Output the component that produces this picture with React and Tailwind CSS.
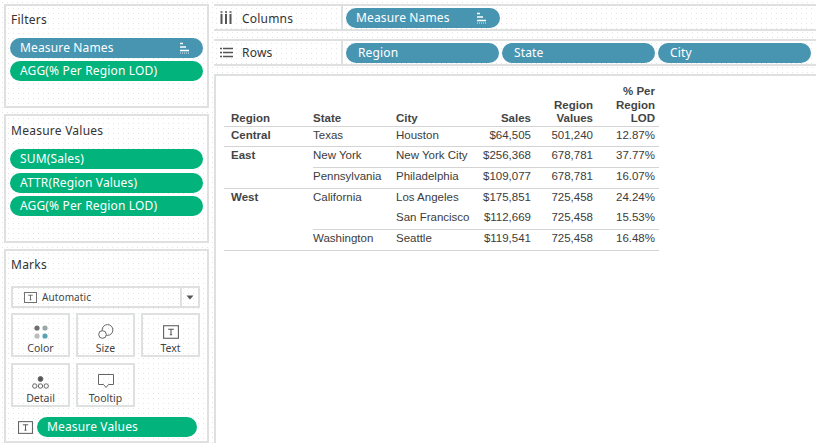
const ui = { fontFamily: '"Noto Sans", "Open Sans", sans-serif' };
const arial = { fontFamily: '"Liberation Sans", Arial, sans-serif' };
const dots = "bg-white bg-[radial-gradient(#e4e4e4_0.7px,transparent_0.8px)] bg-[size:5px_5px]";

function SortIcon() {
  return (
    <svg width="12" height="12" viewBox="0 0 12 12" className="shrink-0">
      <path d="M1 1.5h3M1 5h6M1 8.5h9" stroke="#fff" strokeWidth="1.6" />
      <path d="M1 11h10" stroke="#fff" strokeWidth="0.8" strokeDasharray="1 1" />
    </svg>
  );
}

function Pill({ children, blue, sort, className = "" }) {
  return (
    <div
      className={`flex h-5 items-center justify-between rounded-full pl-[10px] pr-3 text-[12px] tracking-[0.15px] text-white ${blue ? "bg-[#4895b2]" : "bg-[#02b37c]"} ${className}`}
    >
      <span>{children}</span>
      {sort && <SortIcon />}
    </div>
  );
}

function Card({ title, titleClass = "", className = "", children }) {
  return (
    <section className={`border-2 border-[#dfe1e0] ${dots} px-1 ${className}`}>
      <h2 className={`pl-[1px] text-[12px] leading-[20px] tracking-[0.25px] text-[#333] ${titleClass}`}>{title}</h2>
      {children}
    </section>
  );
}

function TGlyph({ size = 14 }) {
  return (
    <svg width={size} height={size - 2} viewBox="0 0 14 12" className="shrink-0">
      <rect x="0.5" y="0.5" width="13" height="11" fill="#fff" stroke="#666" />
      <path d="M4.5 3.5h5M7 3.5v5M6 8.5h2" stroke="#555" strokeWidth="0.9" fill="none" />
    </svg>
  );
}

function MarkCard({ label, children }) {
  return (
    <div className="flex h-[44px] w-[59px] flex-col items-center border-2 border-[#dfe1e0]">
      <div className="flex h-[25px] items-end justify-center">{children}</div>
      <div className="mt-[2px] text-[10.5px] leading-[14px] text-[#444]">{label}</div>
    </div>
  );
}

function Shelf({ label, icon, className = "", labelClass = "", children }) {
  return (
    <div className={`flex h-[27px] items-stretch border-y-2 border-[#dfe1e0] ${dots} ${className}`}>
      <div className="flex w-[129px] shrink-0 items-center border-r-2 border-[#dfe1e0] pl-[6px]">
        <span className="flex w-[22px] justify-start">{icon}</span>
        <span className={`text-[12px] tracking-[0.2px] text-[#333] ${labelClass}`}>{label}</span>
      </div>
      <div className="flex flex-1 items-center gap-[3px] pl-[3px]">{children}</div>
    </div>
  );
}

const rows = [
  { r: "Central", s: "Texas", c: "Houston", v: ["$64,505", "501,240", "12.87%"], rb: true, sb: true, cb: true },
  { r: "East", s: "New York", c: "New York City", v: ["$256,368", "678,781", "37.77%"], rb: false, sb: true, cb: true },
  { r: "", s: "Pennsylvania", c: "Philadelphia", v: ["$109,077", "678,781", "16.07%"], rb: true, sb: true, cb: true },
  { r: "West", s: "California", c: "Los Angeles", v: ["$175,851", "725,458", "24.24%"], rb: false, sb: false, cb: false },
  { r: "", s: "", c: "San Francisco", v: ["$112,669", "725,458", "15.53%"], rb: false, sb: true, cb: true },
  { r: "", s: "Washington", c: "Seattle", v: ["$119,541", "725,458", "16.48%"], rb: true, sb: true, cb: true },
];

const line = "border-b border-[#d4d4d4]";

function DataTable() {
  return (
    <div className="ml-[8px] mt-[8px] w-[435px] text-[11.5px] leading-[13px] text-[#3c3c3c]" style={arial}>
      <div className={`grid grid-cols-[89px_83px_85px_50px_62px_66px] items-end leading-[13.5px] ${line} font-bold text-[#444]`}>
        <div className="pl-[7px]">Region</div>
        <div>State</div>
        <div>City</div>
        <div className="text-right">Sales</div>
        <div className="text-right">Region<br />Values</div>
        <div className="pr-[4px] text-right">% Per<br />Region<br />LOD</div>
      </div>
      {rows.map((x, i) => (
        <div key={i} className="grid h-[20.7px] grid-cols-[89px_83px_85px_50px_62px_66px] items-stretch">
          <div className={`pl-[7px] pt-[2px] font-bold text-[#444] ${x.rb ? line : ""}`}>{x.r}</div>
          <div className={`pt-[2px] ${x.sb ? line : ""}`}>{x.s}</div>
          <div className={`pt-[2px] whitespace-nowrap ${x.cb ? line : ""}`}>{x.c}</div>
          <div className={`pt-[2px] text-right whitespace-nowrap ${x.cb ? line : ""}`}>{x.v[0]}</div>
          <div className={`pt-[2px] text-right ${x.cb ? line : ""}`}>{x.v[1]}</div>
          <div className={`pr-[4px] pt-[2px] text-right ${x.cb ? line : ""}`}>{x.v[2]}</div>
        </div>
      ))}
    </div>
  );
}

export default function App() {
  return (
    <div className={`flex h-[443px] w-[816px] gap-[5px] overflow-hidden pl-[4px] pt-[4px] ${dots}`} style={ui}>
      <aside className="flex w-[205px] shrink-0 flex-col">
        <Card title="Filters" titleClass="mt-[4px] mb-[8px]" className="h-[104px]">
          <div className="flex flex-col gap-[3px]">
            <Pill blue sort>Measure Names</Pill>
            <Pill>AGG(% Per Region LOD)</Pill>
          </div>
        </Card>
        <Card title="Measure Values" titleClass="mt-[5px] mb-[8px]" className="mt-[6px] h-[129px]">
          <div className="flex flex-col gap-[3.5px]">
            <Pill>SUM(Sales)</Pill>
            <Pill>ATTR(Region Values)</Pill>
            <Pill>AGG(% Per Region LOD)</Pill>
          </div>
        </Card>
        <Card title="Marks" titleClass="mt-[4px] mb-[11px]" className="mt-[6px] flex-1">
          <div className="ml-[1px] flex h-[22px] w-[189px] items-center border-2 border-[#dfe1e0] pl-[11px]">
            <TGlyph size={13} />
            <span className="ml-[5px] flex-1 -translate-y-[0.5px] text-[10px] tracking-[0.1px] text-[#444]">Automatic</span>
            <span className="flex h-full w-[18px] items-center justify-center border-l-2 border-[#dfe1e0]">
              <svg width="8" height="5" viewBox="0 0 8 5"><path d="M0.5 0.5h7L4 4.5z" fill="#555" /></svg>
            </span>
          </div>
          <div className="ml-[1px] mt-[5px] grid w-[189px] grid-cols-[59px_59px_59px] gap-x-[6px] gap-y-[6px]">
            <MarkCard label="Color">
              <svg width="14" height="14" viewBox="0 0 14 14">
                <circle cx="3" cy="3" r="2.6" fill="#6f6f6f" />
                <circle cx="11" cy="3" r="2.6" fill="#9aa7a8" />
                <circle cx="3" cy="11" r="2.6" fill="#b9bdbd" />
                <circle cx="11" cy="11" r="2.6" fill="#5aa3b5" />
              </svg>
            </MarkCard>
            <MarkCard label="Size">
              <svg width="16" height="15" viewBox="0 0 16 15" fill="none" stroke="#666">
                <circle cx="9.5" cy="6" r="5.4" />
                <circle cx="4.5" cy="10.5" r="3.8" fill="#fff" />
              </svg>
            </MarkCard>
            <MarkCard label="Text"><TGlyph size={16} /></MarkCard>
            <MarkCard label="Detail">
              <svg width="17" height="13" viewBox="0 0 17 13" fill="none" stroke="#666">
                <circle cx="8.5" cy="3" r="2.4" fill="#555" />
                <circle cx="2.8" cy="10" r="2.2" />
                <circle cx="8.5" cy="10" r="2.2" />
                <circle cx="14.2" cy="10" r="2.2" />
              </svg>
            </MarkCard>
            <MarkCard label="Tooltip">
              <svg width="16" height="15" viewBox="0 0 16 15" fill="none" stroke="#666">
                <path d="M0.5 0.5h15v10h-5l-2.5 3-2.5-3h-5z" />
              </svg>
            </MarkCard>
          </div>
          <div className="mt-[10px] flex items-center gap-[4px] pl-[8px]">
            <TGlyph size={15} />
            <Pill className="w-[160px] text-[12.5px]">Measure Values</Pill>
          </div>
        </Card>
      </aside>
      <main className="flex min-w-0 flex-1 flex-col">
        <Shelf
          label="Columns"
          labelClass="translate-y-[0.5px]"
          icon={
            <svg width="12" height="13" viewBox="0 0 12 13">
              <path d="M1.5 3v10M6 3v10M10.5 3v10" stroke="#555" strokeWidth="2" />
              <path d="M0.5 1h2M5 1h2M9.5 1h2" stroke="#555" strokeWidth="1.5" />
            </svg>
          }
        >
          <Pill blue sort className="w-[154px]">Measure Names</Pill>
        </Shelf>
        <Shelf
          label="Rows"
          className="mt-[8px]"
          labelClass="-translate-y-[0.5px]"
          icon={
            <svg width="13" height="11" viewBox="0 0 13 11">
              <path d="M0 1.5h2M3 1.5h10M0 5.5h2M3 5.5h10M0 9.5h2M3 9.5h10" stroke="#555" strokeWidth="1.6" />
            </svg>
          }
        >
          <Pill blue className="w-[153px] pl-[12px]">Region</Pill>
          <Pill blue className="w-[153px] pl-[12px]">State</Pill>
          <Pill blue className="w-[153px] pl-[12px]">City</Pill>
        </Shelf>
        <div className="mt-[8px] flex-1 border-l-2 border-t-2 border-[#dfe1e0] bg-white pt-[1px]">
          <DataTable />
        </div>
      </main>
    </div>
  );
}
